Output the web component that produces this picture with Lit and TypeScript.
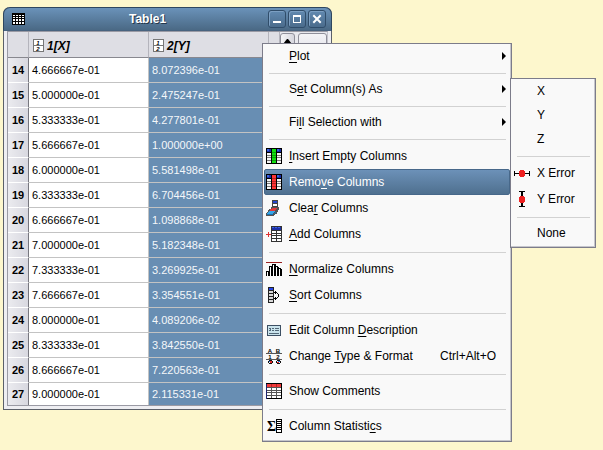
import { LitElement, html, css, svg, nothing, TemplateResult } from "lit";
import { customElement, property } from "lit/decorators.js";

interface Entry {
  before?: string;
  key?: string;
  after?: string;
  icon?: string;
  shortcut?: string;
  submenu?: boolean;
  active?: boolean;
  separator?: boolean;
}

const SEP: Entry = { separator: true };

const COLUMN_MENU: Entry[] = [
  { key: "P", after: "lot", submenu: true },
  SEP,
  { before: "S", key: "e", after: "t Column(s) As", submenu: true },
  SEP,
  { before: "Fi", key: "l", after: "l Selection with", submenu: true },
  SEP,
  { key: "I", after: "nsert Empty Columns", icon: "insert" },
  { before: "Remo", key: "v", after: "e Columns", icon: "remove", active: true },
  { before: "Clea", key: "r", after: " Columns", icon: "clear" },
  { key: "A", after: "dd Columns", icon: "add" },
  SEP,
  { key: "N", after: "ormalize Columns", icon: "normalize" },
  { key: "S", after: "ort Columns", icon: "sort" },
  SEP,
  { before: "Edit Column ", key: "D", after: "escription", icon: "edit" },
  { before: "Change ", key: "T", after: "ype & Format", icon: "format", shortcut: "Ctrl+Alt+O" },
  SEP,
  { before: "Show Comments", icon: "comments" },
  SEP,
  { before: "Column Statisti", key: "c", after: "s", icon: "stats" },
];

const SET_AS_MENU: Entry[] = [
  { before: "X" },
  { before: "Y" },
  { before: "Z" },
  SEP,
  { before: "X Error", icon: "xerror" },
  { before: "Y Error", icon: "yerror" },
  SEP,
  { before: "None" },
];

const ROWS: [number, string, string][] = [
  [14, "4.666667e-01", "8.072396e-01"],
  [15, "5.000000e-01", "2.475247e-01"],
  [16, "5.333333e-01", "4.277801e-01"],
  [17, "5.666667e-01", "1.000000e+00"],
  [18, "6.000000e-01", "5.581498e-01"],
  [19, "6.333333e-01", "6.704456e-01"],
  [20, "6.666667e-01", "1.098868e-01"],
  [21, "7.000000e-01", "5.182348e-01"],
  [22, "7.333333e-01", "3.269925e-01"],
  [23, "7.666667e-01", "3.354551e-01"],
  [24, "8.000000e-01", "4.089206e-02"],
  [25, "8.333333e-01", "3.842550e-01"],
  [26, "8.666667e-01", "7.220563e-01"],
  [27, "9.000000e-01", "2.115331e-01"],
];

/* Three-column grid with the middle column tinted. */
const columns = (mid: string) => svg`
  <path fill="#000" d="M0 0h16v16H0z"/>
  <path fill="#1c2fa8" d="M1 1h4v3H1zM11 1h4v3h-4z"/>
  <path fill="#3a63e0" d="M1 1h2v2H1zM11 1h2v2h-2z"/>
  <path fill="#f4f4f4" d="M1 5h4v2H1zM1 8h4v1H1zM1 10h4v2H1zM1 13h4v2H1zM11 5h4v2h-4zM11 8h4v1h-4zM11 10h4v2h-4zM11 13h4v2h-4z"/>
  <path fill="#777" d="M1 7h4v1H1zM1 9h4v1H1zM1 12h4v1H1zM11 7h4v1h-4zM11 9h4v1h-4zM11 12h4v1h-4z"/>
  <path fill="${mid}" d="M6 1h4v3H6zM6 5h4v2H6zM6 8h4v1H6zM6 10h4v2H6zM6 13h4v2H6z"/>
  <path fill="${mid}" opacity=".7" d="M6 4h4v1H6zM6 7h4v1H6zM6 9h4v1H6zM6 12h4v1H6z"/>`;

const ICONS: Record<string, TemplateResult | ReturnType<typeof svg>> = {
  insert: columns("#10e010"),
  remove: columns("#ff3434"),
  clear: svg`
    <path fill="#444" d="M6 0h6v7H6z"/><path fill="#2346cf" d="M7 1h4v2H7z"/><path fill="#fff" d="M7 4h4v2H7z"/>
    <path fill="#555" d="M5 7h8v3h-1v2h-1v2H9v1H8v1H0v-3h1v-1h1v-2h1V9h2z"/>
    <path fill="#e33b3b" d="M6 8h5v1h-1v1H9v1H4V9h2z"/>
    <path fill="#35a5ea" d="M3 11h6v1H8v1H7v1H1v-1h1v-1h1z"/><path fill="#176fb0" d="M1 14h6v1H1zM9 12h1v1H9zM8 13h1v1H8z"/>`,
  add: svg`
    <path fill="#333" d="M5 0h11v16H5z"/>
    <path fill="#1c2fa8" d="M6 1h9v3H6z"/><path fill="#3a63e0" d="M6 1h2v1H6zM9 1h2v1H9zM12 1h2v1h-2z"/>
    <path fill="#fff" d="M6 5h4v2H6zM11 5h4v2h-4zM6 8h4v1H6zM11 8h4v1h-4zM6 10h4v2H6zM11 10h4v2h-4zM6 13h4v2H6zM11 13h4v2h-4z"/>
    <path fill="#e03030" d="M0 8h5v1H0zM2 6h1v5H2z"/>`,
  normalize: svg`
    <path fill="#9b2020" d="M0 1h16v1H0z"/>
    <path fill="#000" d="M0 10h3V5h3V3h4v2h2v1h1v1h2v1h1v7H0z"/>
    <path fill="#fff" d="M1 11h1v4H1zM4 6h1v9H4zM7 4h1v11H7zM10 6h1v9h-1zM13 8h1v7h-1z"/>`,
  sort: svg`
    <path fill="#222" d="M2 0h6v16H2z"/><path fill="#2546e8" d="M3 1h4v2H3z"/>
    <path fill="#d8d8d8" d="M3 4h4v2H3zM3 7h4v2H3zM3 10h4v2H3zM3 13h4v2H3z"/>
    <path fill="#000" d="M8 5h3v1H8zM9 4h1v3H9zM11 6h1v1h-1zM12 7h1v3h-1zM11 10h1v1h-1zM8 11h3v1H8zM9 10h1v3H9z"/>`,
  edit: svg`
    <path fill="#3d4f63" d="M1 3h14v11H1z"/><path fill="#c9e3ec" d="M2 4h12v9H2z"/>
    <path fill="#536878" d="M3 6h2v1H3zM4 7h1v1H4zM3 8h2v1H3zM6 6h2v1H6zM6 8h2v1H6zM9 6h4v1H9zM9 8h4v1H9zM3 11h10v1H3z"/>`,
  format: svg`
    <path fill="#555" d="M0 5h16v1H0zM0 11h16v1H0z"/>
    <g font-family="Liberation Sans, Arial, sans-serif" font-size="6" font-weight="700" fill="#000" text-anchor="middle">
      <text x="4" y="5">A</text><text x="12" y="5">B</text>
      <text x="4" y="11">1</text><text x="12" y="11">2</text>
    </g>
    <path fill="#111" d="M3 12h3v1H3zM2 13h1v2H2zM6 13h1v2H6zM3 15h3v1H3zM11 12h3v1h-3zM10 13h1v2h-1zM14 13h1v2h-1zM11 15h3v1h-3z"/>
    <path fill="#e02828" d="M4 13h2v2H4zM11 14h2v1h-2z"/><path fill="#2870d0" d="M3 13h1v1H3zM12 13h2v1h-2z"/>`,
  comments: svg`
    <path fill="#000" d="M0 0h16v16H0z"/><path fill="#1d2470" d="M0 1h1v15H0z"/>
    <path fill="#f03a3a" d="M1 1h4v3H1zM6 1h4v3H6zM11 1h4v3h-4z"/><path fill="#b82424" d="M5 1h1v3H5zM10 1h1v3h-1z"/>
    <path fill="#555" d="M1 4h14v11H1z"/>
    <path fill="#fff" d="M1 5h4v2H1zM6 5h4v2H6zM11 5h4v2h-4zM1 8h4v1H1zM6 8h4v1H6zM11 8h4v1h-4zM1 10h4v2H1zM6 10h4v2H6zM11 10h4v2h-4zM1 13h4v2H1zM6 13h4v2H6zM11 13h4v2h-4z"/>`,
  stats: svg`
    <text x="1" y="13" font-family="Liberation Serif, serif" font-size="14" font-weight="700" fill="#000">Σ</text>
    <path fill="#000" d="M10 1h6v14h-6z"/><path fill="#fff" d="M11 2h4v1h-4zM11 4h4v1h-4zM11 6h4v1h-4zM11 8h4v1h-4zM11 10h4v1h-4zM11 12h4v2h-4z"/>`,
  xerror: svg`
    <path fill="#000" d="M0 6h1v5H0zM15 6h1v5h-1zM1 8h14v1H1z"/>
    <path fill="#ee2020" d="M6 5h4v1h1v5h-1v1H6v-1H5V6h1z"/>`,
  yerror: svg`
    <path fill="#000" d="M5 0h6v1H5zM5 15h6v1H5zM7 1h2v14H7z"/>
    <path fill="#ee2020" d="M6 5h4v1h1v5h-1v1H6v-1H5V6h1z"/>`,
};

@customElement("popup-menu")
export class PopupMenu extends LitElement {
  @property({ attribute: false }) entries: Entry[] = [];
  @property() label = "";

  static styles = css`
    :host {
      display: block;
      box-sizing: border-box;
      border: 1px solid #7c7c8a;
      background: #f9f9f9;
      box-shadow: inset -1px -1px #c6c6cc;
    }
    ul { list-style: none; margin: 0; padding: 0 1px 2px; }
    button {
      display: flex;
      align-items: center;
      box-sizing: border-box;
      width: 100%;
      height: 24px;
      padding: 0 4px 0 2px;
      border: 0;
      background: none;
      color: #000;
      font: 12px/16px "Liberation Sans", Arial, sans-serif;
      text-align: left;
      white-space: pre;
    }
    .tall { height: 26px; }
    .active {
      background: linear-gradient(#6c91b8, #4f708f);
      border: 1px solid #47688a;
      border-radius: 2px;
      padding: 0 3px 0 1px;
      color: #fff;
    }
    .icon { flex: none; width: 16px; height: 16px; margin-right: 7px; }
    .icon svg { display: block; }
    .text { flex: 1; }
    .shortcut { margin-right: 10px; }
    u { text-decoration: underline 1px; text-underline-offset: 2px; text-decoration-skip-ink: none; }
    .arrow {
      border: solid transparent;
      border-width: 4px 0 4px 4px;
      border-left-color: #000;
    }
    .sep { box-sizing: border-box; height: 9px; display: flex; align-items: center; padding: 2px 4px 0 5px; }
    .sep::before { content: ""; flex: 1; height: 1px; background: #d2d2d2; }
  `;

  render() {
    return html`<ul role="menu" aria-label=${this.label}>
      ${this.entries.map((e) =>
        e.separator
          ? html`<li class="sep" role="separator"></li>`
          : html`<li role="none">
              <button role="menuitem" class="${e.icon ? "tall" : ""} ${e.active ? "active" : ""}">
                <span class="icon">${e.icon
                  ? html`<svg width="16" height="16" viewBox="0 0 16 16" shape-rendering="crispEdges" aria-hidden="true">${ICONS[e.icon]}</svg>`
                  : nothing}</span>
                <span class="text">${e.before ?? ""}${e.key ? html`<u>${e.key}</u>` : nothing}${e.after ?? ""}</span>
                ${e.shortcut ? html`<span class="shortcut">${e.shortcut}</span>` : nothing}
                ${e.submenu ? html`<span class="arrow"></span>` : nothing}
              </button>
            </li>`
      )}
    </ul>`;
  }
}

@customElement("table-window")
export class TableWindow extends LitElement {
  static styles = css`
    :host {
      display: block;
      box-sizing: border-box;
      border: 1px solid #5b6069;
      border-top: 0;
      border-radius: 7px 7px 0 0;
      background: #eeeef2;
      font: 11px/14px "Liberation Sans", Arial, sans-serif;
      color: #000;
    }
    .bar {
      display: flex;
      align-items: center;
      gap: 2px;
      box-sizing: border-box;
      height: 24px;
      margin: 0 -1px;
      padding: 0 5px 0 8px;
      border: 1px solid #2f475f;
      border-bottom-color: #48637f;
      border-radius: 7px 7px 0 0;
      background: linear-gradient(#6a92b9, #4a6985);
    }
    .title {
      flex: 1;
      margin: 0;
      padding-left: 2px;
      color: #fff;
      font: bold 12px/16px "Liberation Sans", Arial, sans-serif;
      text-align: center;
      text-shadow: 1px 1px #24384c;
    }
    .bar button {
      width: 18px;
      height: 18px;
      padding: 0;
      border: 1px solid #304d6a;
      border-radius: 3px;
      background: linear-gradient(#6189b0, #4b6c8c);
      box-shadow: inset 1px 1px #7c9fc2;
    }
    svg { display: block; }
    .frame {
      display: flex;
      margin: 0 3px 3px;
      border: 1px solid #9a9aa4;
      border-right-color: #c4c4cc;
      background: #e9e9ee;
    }
    table { flex: none; width: 272px; table-layout: fixed; border-collapse: separate; border-spacing: 0; }
    .cn { width: 21px; }
    .cv { width: 120px; }
    th, td { box-sizing: border-box; padding: 0; font-weight: normal; text-align: left; }
    thead th { height: 26px; background: #dedee4; border-bottom: 1px solid #88888f; border-right: 1px solid #b4b4bc; }
    .head {
      display: flex;
      align-items: center;
      gap: 3px;
      padding: 2px 0 0 4px;
      font: italic bold 12px/16px "Liberation Sans", Arial, sans-serif;
    }
    tbody th {
      height: 25px;
      background: linear-gradient(90deg, #ebebef, #d8d8e0);
      border-right: 1px solid #77777f;
      border-bottom: 1px solid #fff;
      font: bold 11px/14px "Liberation Sans", Arial, sans-serif;
      text-align: center;
    }
    td { padding-left: 3px; background: #fff; border-bottom: 1px solid #c3c3c3; }
    td:nth-child(2) { border-right: 1px solid #c3c3c3; }
    td.sel { background: #688eb3; color: #f4f7fa; }
    tbody tr:last-child th { height: 22px; }
    tbody tr:last-child > * { border-bottom: 0; }
    .scroll { display: flex; gap: 3px; flex: 1; align-items: flex-start; padding-top: 1px; }
    .scroll button {
      height: 26px;
      width: 15px;
      padding: 5px 0 0;
      border: 1px solid #8f8f9a;
      border-radius: 3px;
      background: linear-gradient(90deg, #f6f6f8, #d6d6de);
      display: flex;
      justify-content: center;
    }
    .scroll .wide { flex: 1; background: linear-gradient(#f4f4f7, #dcdce4); }
  `;

  private head(name: string) {
    return html`<div class="head">
      <svg width="11" height="13" viewBox="0 0 11 13" aria-hidden="true" shape-rendering="crispEdges">
        <path fill="#777" d="M0 0h11v13H0z" /><path fill="#fff" d="M1 1h9v5H1zM1 7h9v5H1z" />
        <g font-family="Liberation Sans, Arial, sans-serif" font-size="6" font-weight="700" text-anchor="middle">
          <text x="5" y="6">1</text><text x="5" y="12">2</text>
        </g>
      </svg>
      <span>${name}</span>
    </div>`;
  }

  render() {
    return html`
      <header class="bar">
        <svg width="13" height="12" viewBox="0 0 13 12" aria-hidden="true" shape-rendering="crispEdges">
          <path d="M0 0h13v12H0z" />
          <path fill="#fff" d="M1 2h2v1H1zM4 2h2v1H4zM7 2h2v1H7zM10 2h2v1h-2zM1 4h2v1H1zM4 4h2v1H4zM7 4h2v1H7zM10 4h2v1h-2zM1 6h2v2H1zM4 6h2v2H4zM7 6h2v2H7zM10 6h2v2h-2zM1 9h2v2H1zM4 9h2v2H4zM7 9h2v2H7zM10 9h2v2h-2z" />
        </svg>
        <h1 class="title">Table1</h1>
        <button aria-label="Minimize"><svg width="16" height="16" viewBox="0 0 16 16"><path d="M4 10h8v2H4z" fill="#fff" /></svg></button>
        <button aria-label="Maximize"><svg width="16" height="16" viewBox="0 0 16 16"><path d="M4 4h8v8H4zM5 6v5h6V6z" fill="#fff" fill-rule="evenodd" /></svg></button>
        <button aria-label="Close"><svg width="16" height="16" viewBox="0 0 16 16"><path d="M5 5l6 6M11 5l-6 6" stroke="#fff" stroke-width="2" stroke-linecap="square" /></svg></button>
      </header>
      <div class="frame">
        <table>
          <colgroup><col class="cn" /><col class="cv" /><col class="cv" /><col /></colgroup>
          <thead>
            <tr><th></th><th scope="col">${this.head("1[X]")}</th><th scope="col">${this.head("2[Y]")}</th><th></th></tr>
          </thead>
          <tbody>
            ${ROWS.map(([n, x, y]) => html`<tr><th scope="row">${n}</th><td>${x}</td><td class="sel">${y}</td><td></td></tr>`)}
          </tbody>
        </table>
        <div class="scroll">
          <button aria-label="Scroll up"><svg width="9" height="5" viewBox="0 0 9 5"><path d="M4 0h1l4 5H0z" /></svg></button>
          <button class="wide" aria-label="Panel"></button>
        </div>
      </div>
    `;
  }
}

@customElement("app-root")
export class AppRoot extends LitElement {
  static styles = css`
    :host { display: block; position: relative; min-height: 100vh; overflow: hidden; background: #fdf7cd; }
    table-window { position: absolute; left: 3px; top: 7px; width: 329px; }
    .main { position: absolute; left: 262px; top: 43px; width: 250px; }
    .sub { position: absolute; left: 510px; top: 78px; width: 86px; }
  `;

  render() {
    return html`
      <table-window></table-window>
      <popup-menu class="main" label="Column" .entries=${COLUMN_MENU}></popup-menu>
      <popup-menu class="sub" label="Set Column(s) As" .entries=${SET_AS_MENU}></popup-menu>
    `;
  }
}
